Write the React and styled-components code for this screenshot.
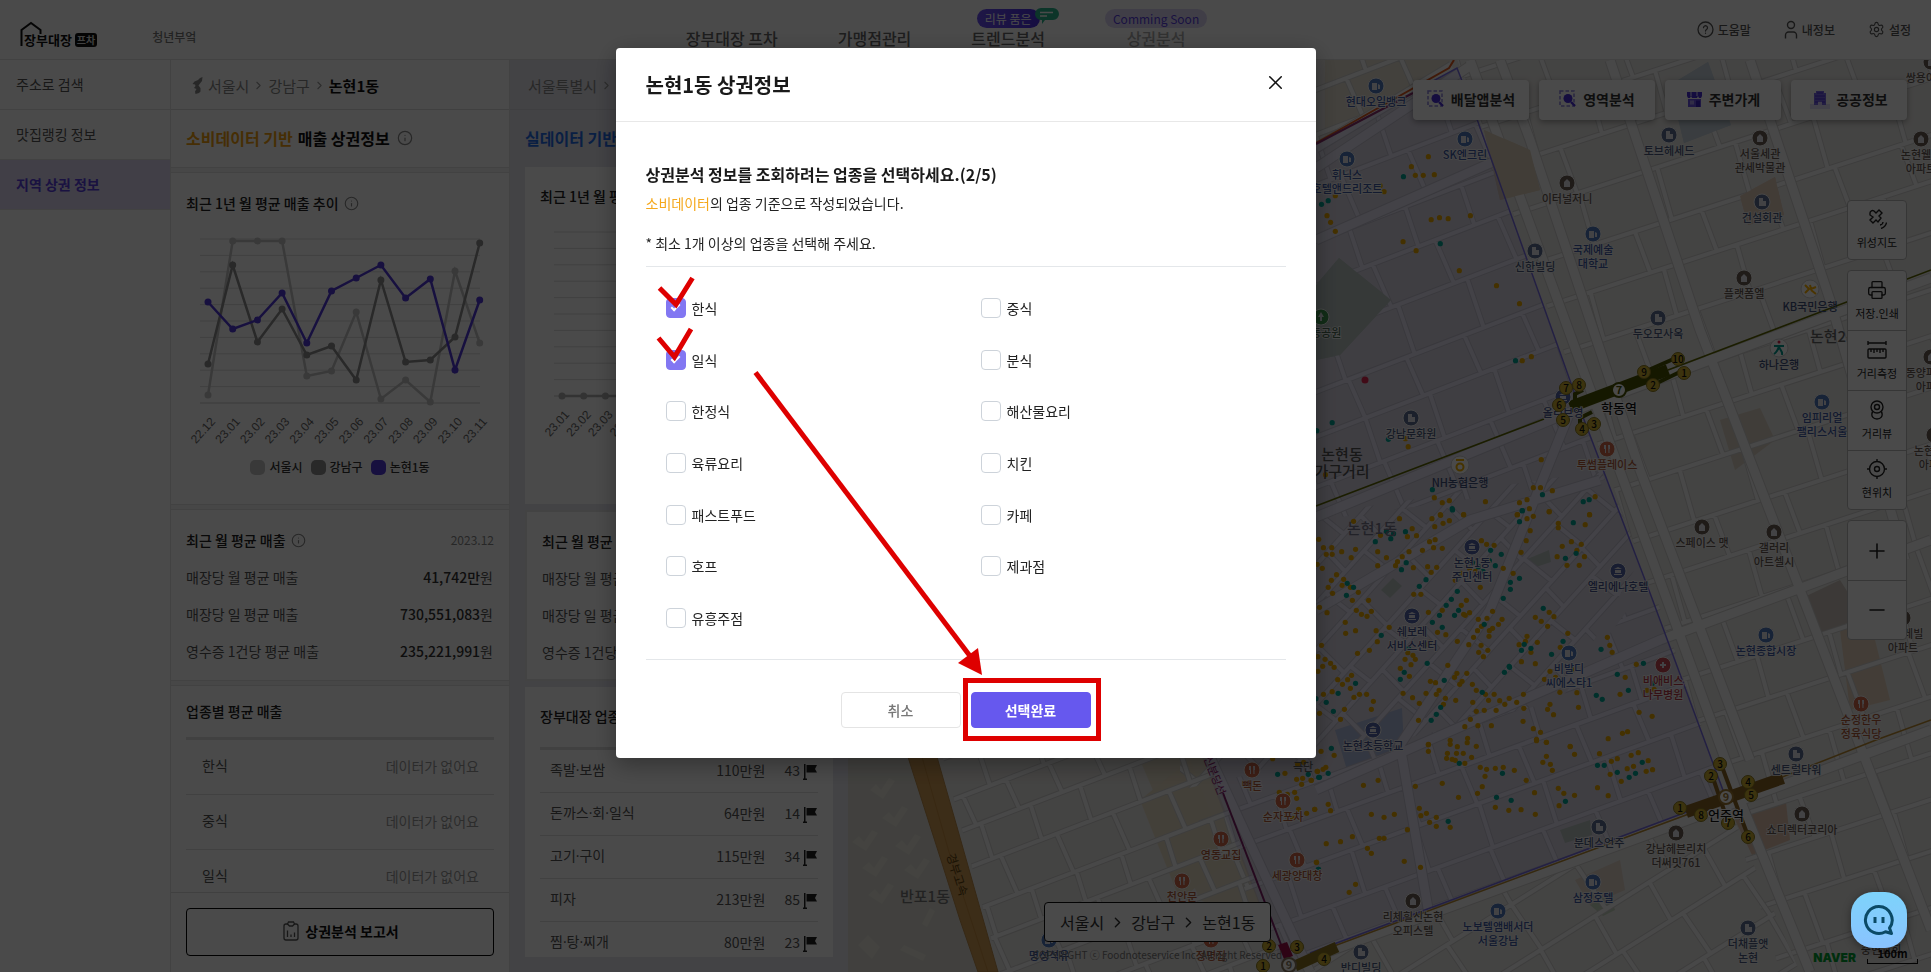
import React, { useState } from "react";
import styled, { createGlobalStyle, css } from "styled-components";
import { ChevronRight, Info, Minus, Plus, Printer, Settings, X } from "lucide-react";

const GlobalStyle = createGlobalStyle`
  *, *::before, *::after { box-sizing: border-box; }
  body {
    margin: 0;
    font-family: "Noto Sans CJK KR", "Noto Sans", sans-serif;
    font-size: 14px;
    line-height: 22px;
    color: #333;
    background: #fff;
  }
  button, input { font: inherit; color: inherit; }
  h1, h2, h3, p, ul { margin: 0; padding: 0; font-size: inherit; font-weight: inherit; }
  ul { list-style: none; }
  a { color: inherit; text-decoration: none; }
`;

/* ---------- page frame ---------- */

const Page = styled.div`
  height: 100vh;
  display: flex;
  flex-direction: column;
  overflow: hidden;
`;

const Header = styled.header`
  flex: none;
  height: 60px;
  padding: 0 20px;
  display: flex;
  border-bottom: 1px solid #e3e3e3;
`;

const HeaderSide = styled.div`
  flex: 1;
  display: flex;
  align-items: center;
  gap: 55px;
`;

const Logo = styled.a`
  position: relative;
  display: flex;
  align-items: flex-end;
  gap: 3px;
  height: 28px;
  margin-top: 10px;
  padding-left: 4px;
  font-size: 13px;
  line-height: 18px;
  font-weight: 700;
  color: #111;
`;

const LogoRoof = styled.svg`
  position: absolute;
  left: 0;
  top: 0;
`;

const LogoTag = styled.span`
  padding: 0 2px;
  border-radius: 3px;
  background: #111;
  color: #ddd;
  font-size: 10px;
  line-height: 14px;
  margin-bottom: 2px;
`;

const Brand = styled.span`
  font-size: 12px;
  font-weight: 500;
  color: #777;
  padding-top: 14px;
`;

const Nav = styled.nav`
  display: flex;
  align-items: flex-end;
  gap: 60px;
  padding-bottom: 11px;
  margin-right: 38px;
`;

const NavLink = styled.a`
  position: relative;
  display: flex;
  flex-direction: column;
  align-items: center;
  font-size: 16px;
  line-height: 20px;
  font-weight: 500;
  color: ${(p) => (p.$muted ? "#aaa" : "#666")};
`;

const Pill = styled.span`
  padding: 0 8px;
  border-radius: 10px;
  font-size: 12px;
  line-height: 19px;
  font-weight: 400;
  color: ${(p) => (p.$solid ? "#fff" : "#5a3fe0")};
  background: ${(p) => (p.$solid ? "linear-gradient(90deg, #6a50f0, #4a2fe0)" : "#dcd6f5")};
`;

const Bubble = styled.svg`
  position: absolute;
  top: -1px;
  right: -14px;
`;

const Utils = styled.div`
  flex: 1;
  display: flex;
  justify-content: flex-end;
  align-items: center;
  gap: 33px;
`;

const UtilButton = styled.button`
  display: flex;
  align-items: center;
  gap: 4px;
  padding: 0;
  border: 0;
  background: none;
  font-size: 12px;
  font-weight: 500;
  color: #555;
`;

const Body = styled.div`
  flex: 1;
  min-height: 0;
  display: flex;
`;

const SideNav = styled.nav`
  flex: none;
  width: 171px;
  border-right: 1px solid #e3e3e3;
`;

const SideLink = styled.a`
  display: flex;
  align-items: center;
  height: 50px;
  padding: 0 16px 2px;
  color: #555;
  border-bottom: 1px solid #e3e3e3;
  ${(p) =>
    p.$active &&
    css`
      color: #5b40e0;
      font-weight: 700;
      background: #dedaf5;
    `}
`;

/* ---------- panels ---------- */

const Panel = styled.section`
  flex: none;
  display: flex;
  flex-direction: column;
  width: ${(p) => (p.$tinted ? 338 : 339)}px;
  background: ${(p) => (p.$tinted ? "#e6e5ee" : "#f3f3f3")};
  border-right: ${(p) => (p.$tinted ? 0 : 1)}px solid #e3e3e3;
  overflow: hidden;
`;

const Crumbs = styled.div`
  flex: none;
  display: flex;
  align-items: center;
  gap: 3px;
  height: 50px;
  padding: 2px 16px 0 18px;
  font-size: 15px;
  color: #888;
  background: ${(p) => (p.$tinted ? "none" : "#fff")};
  border-bottom: 1px solid ${(p) => (p.$tinted ? "#d8d8e0" : "#ddd")};
  white-space: nowrap;
  svg { flex: none; color: #999; }
  strong { color: #111; }
`;

const PanelTitle = styled.h2`
  flex: none;
  display: flex;
  align-items: center;
  gap: 5px;
  height: ${(p) => (p.$tinted ? 57 : 58)}px;
  margin-bottom: ${(p) => (p.$tinted ? 0 : 4)}px;
  padding: 0 15px 2px;
  font-size: 16px;
  font-weight: 700;
  color: #111;
  background: ${(p) => (p.$tinted ? "none" : "#fff")};
  border-bottom: ${(p) => (p.$tinted ? 0 : 1)}px solid #e3e3e3;
  white-space: nowrap;
  em { font-style: normal; color: ${(p) => (p.$tinted ? "#1f6be8" : "#f0a010")}; }
  svg { margin-left: 2px; color: #888; }
`;

const Section = styled.div`
  flex: ${(p) => (p.$fill ? "1 1 0" : "none")};
  min-height: 0;
  overflow: hidden;
  margin-bottom: ${(p) => (p.$fill ? 0 : 4)}px;
  padding: ${(p) => (p.$fill ? 14 : 19)}px 15px ${(p) => p.$bottom || 0}px;
  background: #fff;
  border-top: 1px solid #e3e3e3;
  border-bottom: ${(p) => (p.$fill ? 0 : 1)}px solid #e3e3e3;
`;

const CardColumn = styled.div`
  flex: 1;
  min-height: 0;
  display: flex;
  flex-direction: column;
  gap: 6px;
  padding: 0 15px 15px;
`;

const Card = styled.div`
  flex: ${(p) => (p.$fill ? "1 1 0" : "none")};
  min-height: 0;
  overflow: hidden;
  padding: 18px 15px ${(p) => p.$bottom || 0}px;
  background: #fff;
  border: ${(p) => (p.$outlined ? 2 : 0)}px solid #e6e6e6;
`;

const SectionTitle = styled.h3`
  display: flex;
  align-items: center;
  gap: 5px;
  font-weight: 500;
  color: #222;
  white-space: nowrap;
  margin-bottom: ${(p) => p.$gap || 0}px;
  svg { color: #888; }
  time { margin-left: auto; font-size: 12px; font-weight: 400; color: #888; }
`;

const ChartSvg = styled.svg`
  display: block;
  width: 100%;
  height: auto;
`;

const Legend = styled.ul`
  display: flex;
  justify-content: center;
  gap: 8px;
  margin-top: 8px;
`;

const LegendItem = styled.li`
  display: flex;
  align-items: center;
  gap: 4px;
  font-size: 12px;
  line-height: 16px;
  font-weight: 500;
  &::before {
    content: "";
    width: 15px;
    height: 15px;
    border-radius: 5px;
    background: ${(p) => p.$color};
  }
`;

const StatRow = styled.p`
  display: flex;
  justify-content: space-between;
  height: 37px;
  padding-right: 1px;
  line-height: 37px;
  color: #555;
  white-space: nowrap;
  b { font-weight: 500; color: #333; }
`;

const Table = styled.table`
  width: 100%;
  border-collapse: separate;
  border-spacing: 0;
  border-top: 3px solid #dedede;
  td, th {
    height: ${(p) => p.$row}px;
    padding: 0 0 2px;
    border-bottom: 1px solid #dedede;
    font-weight: 400;
    text-align: right;
    color: ${(p) => (p.$empty ? "#999" : "#555")};
    white-space: nowrap;
  }
  th {
    text-align: left;
    color: #555;
    font-family: "Open Sans", "Noto Sans CJK KR", sans-serif;
    padding-left: ${(p) => (p.$empty ? 16 : 10)}px;
  }
  td:last-child { padding-right: ${(p) => (p.$empty ? 15 : 1)}px; }
  svg { vertical-align: middle; margin-left: 3px; }
`;

const PanelFooter = styled.div`
  flex: none;
  padding: 15px 15px 16px;
  background: #fff;
  border-top: 1px solid #ddd;
`;

const ReportButton = styled.button`
  display: flex;
  justify-content: center;
  align-items: center;
  gap: 6px;
  width: 100%;
  height: 48px;
  padding: 0 0 2px 2px;
  border: 1px solid #000;
  border-radius: 4px;
  background: #fff;
  font-weight: 700;
  color: #111;
`;

/* ---------- map ---------- */

const MapArea = styled.main`
  position: relative;
  flex: 1;
  min-width: 0;
  background: #e9e7e1;
`;

const MapSvg = styled.svg`
  display: block;
  width: 100%;
  height: 100%;
`;

const MapButtons = styled.div`
  position: absolute;
  top: 20px;
  right: 24px;
  display: flex;
  gap: 10px;
`;

const MapButton = styled.button`
  display: flex;
  justify-content: center;
  align-items: center;
  gap: 6px;
  width: 116px;
  height: 40px;
  padding: 0 0 2px;
  border: 0;
  border-radius: 4px;
  background: #fff;
  box-shadow: 0 2px 6px rgba(0, 0, 0, 0.35);
  font-weight: 700;
  color: #333;
`;

const MapTools = styled.div`
  position: absolute;
  top: 140px;
  right: 24px;
  display: flex;
  flex-direction: column;
  gap: 10px;
`;

const ToolGroup = styled.div`
  width: 60px;
  border: 1px solid #bbb;
  border-radius: 4px;
  background: #fff;
  overflow: hidden;
`;

const ToolButton = styled.button`
  display: flex;
  flex-direction: column;
  justify-content: center;
  align-items: center;
  gap: 4px;
  width: 100%;
  height: 60px;
  padding: 0;
  border: 0;
  background: none;
  font-size: 11px;
  line-height: 18px;
  color: #222;
  &:first-child:not(:last-child) { height: 59px; }
  &:only-child { height: 58px; }
  &:last-child:not(:first-child) { height: 59px; }
  & + & { border-top: 1px solid #bbb; }
`;

const MapFoot = styled.div`
  position: absolute;
  left: 185px;
  bottom: 6px;
  display: flex;
  flex-direction: column;
  align-items: center;
`;

const PlaceBox = styled.div`
  display: flex;
  align-items: center;
  gap: 5px;
  height: 40px;
  padding: 0 15px;
  border: 1px solid #111;
  border-radius: 4px;
  background: #fff;
  font-size: 16px;
  color: #333;
`;

const Copyright = styled.p`
  margin-top: 2px;
  font-size: 10px;
  color: #777;
`;

const MapScale = styled.div`
  position: absolute;
  right: 13px;
  bottom: 8px;
  display: flex;
  align-items: flex-end;
  gap: 11px;
  color: #00a030;
  font-family: Inter, "Noto Sans", sans-serif;
  font-weight: 900;
  font-size: 12px;
  line-height: 12px;
`;

const ScaleBar = styled.span`
  width: 51px;
  height: 15px;
  font-family: "Noto Sans CJK KR", "Noto Sans", sans-serif;
  font-weight: 700;
  font-size: 11px;
  line-height: 9px;
  text-align: center;
  color: #111;
  background:
    linear-gradient(#111, #111) left bottom / 1px 5px no-repeat,
    linear-gradient(#111, #111) right bottom / 1px 5px no-repeat,
    linear-gradient(#111, #111) left bottom / 100% 1px no-repeat;
`;

/* ---------- dialog ---------- */

const Backdrop = styled.div`
  position: fixed;
  inset: 0;
  z-index: 10;
  display: flex;
  justify-content: center;
  align-items: flex-start;
  padding-top: 48px;
  background: rgba(0, 0, 0, 0.71);
`;

const Dialog = styled.form`
  position: relative;
  width: 700px;
  border-radius: 4px;
  background: #fff;
  box-shadow: 0 6px 24px rgba(0, 0, 0, 0.35);
  color: #222;
`;

const DialogHeader = styled.div`
  display: flex;
  justify-content: space-between;
  align-items: center;
  height: 74px;
  padding: 0 30px;
  border-bottom: 1px solid #e8e8e8;
  h1 { font-size: 20px; font-weight: 700; color: #1a1a1a; }
`;

const CloseButton = styled.button`
  display: flex;
  justify-content: center;
  align-items: center;
  width: 20px;
  height: 20px;
  padding: 0;
  margin-bottom: 4px;
  border: 0;
  background: none;
  color: #111;
  svg { flex: none; }
`;

const DialogBody = styled.div`
  padding: 40px 30px 30px;
`;

const Question = styled.h2`
  font-size: 16px;
  line-height: 24px;
  font-weight: 700;
  color: #1a1a1a;
`;

const Hint = styled.p`
  margin-top: ${(p) => p.$gap}px;
  em { font-style: normal; color: #f5a81c; }
`;

const Options = styled.div`
  display: grid;
  grid-template-columns: 315px 1fr;
  grid-auto-rows: 1fr;
  height: 394px;
  margin-top: 12px;
  padding: 15px 20px;
  border: solid #e4e7ea;
  border-width: 1px 0;
`;

const Option = styled.label`
  display: flex;
  align-items: center;
  gap: 6px;
  grid-column: ${(p) => p.$column};
`;

const CheckBox = styled.input`
  appearance: none;
  display: grid;
  place-items: center;
  width: 20px;
  height: 20px;
  margin: 0;
  border: 1px solid #cdd3da;
  border-radius: 4px;
  background: #fff;
  &:checked { background: #8277f2; border-color: #8277f2; }
  &:checked::after {
    content: "";
    width: 5px;
    height: 9px;
    margin-bottom: 2px;
    border: solid #fff;
    border-width: 0 2px 2px 0;
    transform: rotate(45deg);
  }
`;

const Actions = styled.div`
  display: flex;
  justify-content: center;
  gap: 10px;
  margin-top: 32px;
`;

const ActionButton = styled.button`
  width: 120px;
  height: 36px;
  padding: 0;
  border: 1px solid ${(p) => (p.$primary ? "#6658ee" : "#e4e4e4")};
  border-radius: 4px;
  background: ${(p) => (p.$primary ? "#6658ee" : "#fff")};
  color: ${(p) => (p.$primary ? "#fff" : "#777")};
  font-weight: ${(p) => (p.$primary ? 700 : 500)};
`;

const Marks = styled.svg`
  position: absolute;
  left: 0;
  top: 0;
  pointer-events: none;
`;

const ChatButton = styled.button`
  position: fixed;
  right: 24px;
  bottom: 24px;
  z-index: 20;
  display: grid;
  place-items: center;
  width: 56px;
  height: 56px;
  padding: 0;
  border: 0;
  border-radius: 22px;
  background: linear-gradient(#7dd3fb, #8ac3ff);
  box-shadow: 0 2px 8px rgba(0, 0, 0, 0.4);
`;

/* ---------- small icons ---------- */

const KoreaIcon = () => (
  <svg width="16" height="20" viewBox="0 0 16 20" fill="#888">
    <path d="M13.500 1 11 2 9 4 5.500 5.500 3.500 8l2.500.5L6.500 10 5 12l2.500 1-1.500 2.500L6.500 18 10 17l1.500-1.500V12L9.500 9.500 11 7.500l2-2.500z" />
  </svg>
);

const HelpIcon = () => (
  <svg width="17" height="17" viewBox="0 0 17 17" fill="none" stroke="currentColor" strokeWidth="1.300" strokeLinecap="round">
    <circle cx="8.500" cy="8.500" r="7.500" />
    <path d="M6.500 6.700a2 2 0 1 1 3 1.800c-.8.500-1 .8-1 1.500M8.500 12.200v.1" />
  </svg>
);

const UserIcon = () => (
  <svg width="14" height="19" viewBox="0 0 14 19" fill="none" stroke="currentColor" strokeWidth="1.400">
    <circle cx="7" cy="5" r="3.500" />
    <path d="M1.500 18.500V15a3 3 0 0 1 3-3h5a3 3 0 0 1 3 3v3.500" />
  </svg>
);

const ReportIcon = () => (
  <svg width="16" height="20" viewBox="0 0 16 20" fill="none" stroke="#555" strokeWidth="1.300">
    <path d="M5 3H3a2 2 0 0 0-2 2v12a2 2 0 0 0 2 2h10a2 2 0 0 0 2-2V5a2 2 0 0 0-2-2h-2" />
    <path d="M5.500 1h5l1 2-2 2h-3l-2-2zM4.500 9.500V16M8 13.500V16M11.500 11.500V16" />
  </svg>
);

const FlagIcon = () => (
  <svg width="14" height="16" viewBox="0 0 14 16" fill="#222">
    <path d="M1 0h1.500v15H1zM0 14.500h4V16H0zM3.500 1H14l-2 4 2 3.500H3.500z" />
  </svg>
);

const AreaIcon = () => (
  <svg width="18" height="18" viewBox="0 0 18 18" fill="none">
    <rect x="1" y="1" width="14" height="15" stroke="#8f82e0" strokeWidth="1.500" strokeDasharray="3.500 2" />
    <circle cx="9" cy="8.500" r="4.500" fill="#4a2fd8" />
    <path d="m12 12 4 4" stroke="#4a2fd8" strokeWidth="2.400" />
  </svg>
);

const StoreIcon = () => (
  <svg width="17" height="17" viewBox="0 0 17 17">
    <path d="M1 1h15v4l-1 2h-2l-1-2-1 2H6L5 5 4 7H2L1 5z" fill="#4a2fd8" />
    <path d="M4 1h2v4H4zM10 1h2v4h-2z" fill="#9a8cf0" />
    <path d="M2 8h13v8H2z" fill="#6a55e8" />
    <path d="M4 9.500h4v4H4z" fill="#a99cf0" />
    <path d="M10 9.500h4V16h-4z" fill="#3a20c0" />
  </svg>
);

const PublicIcon = () => (
  <svg width="20" height="19" viewBox="0 0 20 19">
    <path d="M0 14h20v5H0z" fill="#e3defc" />
    <path d="M6 1h8v2h2v12H4V3h2z" fill="#7a68e8" />
    <path d="M5 6h10M5 9h10M7 3h6M5 12h3M12 12h3" stroke="#4a2fd8" strokeWidth="1.200" />
    <path d="M8 12h4v3H8z" fill="#d8d0fa" />
  </svg>
);

const toolShapes = {
  satellite: (
    <>
      <path d="M3 4a2.500 2.500 0 0 1 4-2l2 2 3-3 3 3-3 3 2 2-3 4-2-2-3 3-3-3 3-3-3-2z" />
      <path d="M13 16c1.500 0 3-1.500 3-3M14 19.500c3-1 5-3 5.500-6" />
    </>
  ),
  ruler: (
    <>
      <path d="M1 3h18M1 1v4M19 1v4" />
      <rect x="1" y="9" width="18" height="9" rx="1" />
      <path d="M4 9v3M7 9v4M10 9v3M13 9v4M16 9v3" />
    </>
  ),
  roadview: (
    <>
      <circle cx="10" cy="7" r="6" />
      <circle cx="10" cy="7" r="2.500" />
      <path d="M5.500 11.500c-2 5 1 7.500 4.500 7.500s6.500-2.500 4.500-7.500" />
    </>
  ),
  target: (
    <>
      <circle cx="10" cy="10" r="7.500" />
      <circle cx="10" cy="10" r="2.500" />
      <path d="M10 0v3M10 17v3M0 10h3M17 10h3" />
    </>
  ),
};

const ToolIcon = ({ name }) => (
  <svg width="20" height="20" viewBox="0 0 20 20" fill="none" stroke="currentColor" strokeWidth="1.400">
    {toolShapes[name]}
  </svg>
);

/* ---------- charts ---------- */

const months = ["22.12", "23.01", "23.02", "23.03", "23.04", "23.05", "23.06", "23.07", "23.08", "23.09", "23.10", "23.11"];

const series = [
  { name: "서울시", color: "#c4c4c4", ys: [156, 2, 2, 2, 137, 132, 73, 160, 141, 163, 32, 104] },
  { name: "강남구", color: "#8c8c8c", ys: [125, 26, 103, 70, 116, 107, 141, 41, 123, 121, 98, 4] },
  { name: "논현1동", color: "#5038d8", ys: [63, 90, 81, 54, 104, 52, 39, 26, 59, 40, 131, 61] },
];

const flatSeries = [{ name: "실데이터", color: "#b0b0b0", ys: Array(11).fill(164) }];

function LineChart({ labels, data, left, step, end, width }) {
  return (
    <ChartSvg viewBox={`0 0 ${width} 222`}>
      {Array.from({ length: 11 }, (_, i) => (
        <line key={i} x1={left - 8} x2={end} y1={10 + i * 16.4} y2={10 + i * 16.4} stroke={i === 10 ? "#c8c8c8" : "#dcdcdc"} />
      ))}
      {data.map((s) => (
        <g key={s.name} fill={s.color}>
          <polyline
            points={s.ys.map((y, i) => `${left + i * step},${y + 10}`).join(" ")}
            fill="none"
            stroke={s.color}
            strokeWidth="2.500"
          />
          {s.ys.map((y, i) => (
            <circle key={i} cx={left + i * step} cy={y + 10} r="3.500" />
          ))}
        </g>
      ))}
      {labels.map((m, i) => (
        <text
          key={m}
          transform={`translate(${left + 8 + i * step} 193) rotate(-48)`}
          textAnchor="end"
          fontFamily="Liberation Sans, Arial, sans-serif"
          fontSize="12"
          fill="#666"
        >
          {m}
        </text>
      ))}
    </ChartSvg>
  );
}

/* ---------- map drawing ---------- */

function roadGrid(angle, cx, cy, size, stepU, stepV) {
  const out = [];
  const rad = (angle * Math.PI) / 180;
  const point = (u, v) => {
    const x = cx + u * Math.cos(rad) - v * Math.sin(rad);
    const y = cy + u * Math.sin(rad) + v * Math.cos(rad);
    return `${x.toFixed(1)} ${y.toFixed(1)}`;
  };
  let n = 0;
  for (let v = -size; v <= size; ) {
    const next = v + stepV + (n % 3) * 5;
    out.push(`M${point(-size, v)}L${point(size, v)}`);
    for (let u = -size + ((n * 37) % stepU); u < size; u += stepU + ((n * 7) % 19)) {
      out.push(`M${point(u, v)}L${point(u + (n % 2 ? 2 : -2), next)}`);
    }
    v = next;
    n += 1;
  }
  return out.join("");
}

const regions = [
  { id: "north", area: "1180,60 1457,60 1605,480 1180,540", d: roadGrid(-21, 1400, 260, 330, 56, 42) },
  { id: "inner", area: "1180,535 1605,470 1640,560 1560,700 1400,740 1180,790", d: roadGrid(-48, 1420, 620, 300, 46, 26) },
  { id: "south", area: "1180,790 1400,740 1560,700 1650,580 1726,795 1290,972", d: roadGrid(-20, 1480, 800, 320, 50, 36) },
  { id: "east", area: "1457,60 1931,60 1931,972 1780,972 1726,795", d: roadGrid(-18, 1760, 400, 640, 64, 44) },
  { id: "southeast", area: "1726,800 1800,972 1290,972", d: roadGrid(-32, 1600, 920, 300, 60, 44) },
  { id: "southwest", area: "938,740 1200,740 1290,972 1000,972", d: roadGrid(-21, 1100, 860, 220, 44, 32) },
];

const mainRoads =
  "M1316 168 1470 66M1316 240 1520 150M1316 148 1452 66M1470 60 1740 800 1810 972M1316 517 1570 412 1931 278" +
  "M1300 962 1726 806 1931 730M1500 60 1530 140 1640 470 1750 760M1610 60 1700 330 1931 930M1750 60 1830 300 1905 560" +
  "M1316 790 1430 740 1660 640 1931 540M1570 412 1490 610 1400 745 1430 920M1316 610 1470 520 1600 480M1210 757 1310 972";

const blocks = [
  ["#c5d4bf", "1316,285 1339,258 1391,300 1340,355 1316,360"],
  ["#c6d3dc", "1670,85 1708,62 1731,125 1684,143"],
  ["#e4cdbb", "1740,196 1775,177 1784,215 1748,225"],
  ["#e0d1bc", "1484,130 1530,150 1540,190 1500,200"],
  ["#dcd2c4", "1720,420 1760,408 1775,440 1735,470"],
  ["#cdc5bd", "1798,600 1840,580 1862,615 1815,640"],
  ["#c5d4bf", "1525,560 1549,550 1551,562 1536,567"],
  ["#c5d4bf", "1381,590 1393,578 1402,586 1390,598"],
  ["#bccbe0", "1335,730 1402,708 1404,745 1350,780"],
  ["#e6d2bd", "1840,630 1870,620 1890,700 1850,710"],
  ["#e4c4b0", "1735,820 1786,802 1790,840 1752,855"],
  ["#e8dcc4", "1140,800 1190,760 1230,860 1180,900"],
  ["#e2d4c8", "1575,880 1620,860 1625,890 1590,905"],
  ["#c5d4bf", "1590,905 1610,895 1615,910 1603,916"],
  ["#c5d4bf", "1560,830 1590,820 1592,835 1565,843"],
];

const inks = {
  blue: ["#5079bf", "#4059a4"],
  slate: ["#5f7095", "#4d5c80"],
  brown: ["#6c5d54", "#685b53"],
  orange: ["#d2694a", "#b05a38"],
  red: ["#c84a55", "#b83a48"],
  purple: ["#5365a8", "#46528f"],
  green: ["#3f9a50", "#4a6a54"],
};

const pois = [
  [1376, 86, "blue", "현대오일뱅크"], [1465, 139, "blue", "SK엔크린"], [1347, 159, "blue", "휘닉스", "호텔앤드리조트"],
  [1567, 183, "brown", "이터널저니"], [1669, 135, "slate", "토브헤세드"], [1760, 138, "brown", "서울세관", "관세박물관"],
  [1921, 139, "brown", "논현웰스", "아파트"], [1931, 62, "brown", "쌍용아파트"], [1762, 202, "slate", "건설회관"],
  [1593, 234, "blue", "국제예술", "대학교"], [1535, 251, "slate", "신한빌딩"], [1744, 278, "brown", "플랫폼엘"],
  [1658, 318, "slate", "두오모사옥"], [1822, 402, "blue", "임피리얼", "팰리스서울"], [1411, 418, "slate", "강남문화원"],
  [1607, 449, "orange", "투썸플레이스"], [1563, 397, "purple", "올리브영"], [1321, 317, "green", "학동공원"],
  [1931, 357, "brown", "동양파라곤", "아파트"], [1934, 435, "brown", "논현두산", "아파트"], [1472, 547, "purple", "논현1동", "주민센터"],
  [1618, 571, "purple", "엘리에나호텔"], [1702, 527, "brown", "스페이스 맷"], [1774, 532, "brown", "갤러리", "아트셀시"],
  [1412, 616, "purple", "쉐보레", "서비스센터"], [1569, 653, "blue", "비발디", "씨에스타1"], [1766, 635, "blue", "논현종합시장"],
  [1663, 665, "red", "비애비스", "나무병원"], [1861, 704, "orange", "순정한우", "정육식당"], [1903, 618, "brown", "센트레빌", "아파트"],
  [1373, 730, "purple", "논현초등학교"], [1796, 754, "slate", "센트럴타워"], [1599, 827, "slate", "분데스언주"],
  [1676, 833, "brown", "강남헤븐리치", "더써밋761"], [1802, 814, "brown", "쇼디렉터코리아"], [1593, 882, "blue", "삼정호텔"],
  [1413, 901, "brown", "리체힐신논현", "오피스텔"], [1498, 911, "blue", "노보텔앰배서더", "서울강남"], [1361, 952, "slate", "반디빌딩"],
  [1748, 928, "slate", "더채플앳", "논현"], [1252, 770, "orange", "빽돈"], [1283, 801, "orange", "순자포차"],
  [1221, 839, "orange", "영동교집"], [1297, 860, "orange", "세광양대창"], [1182, 881, "orange", "천안문"],
  [1049, 940, "blue", "명성석유"], [1211, 940, "orange", "정명집"], [1881, 934, "brown", "중현교회"],
];

const glyphs = {
  blue: "M-4-3h5v7h-5zM2-2l2 1v4H2",
  slate: "M-3-4h4v8h-4zM1-1h3v5H1z",
  brown: "M-3 4v-5l3-3 3 3v5z",
  orange: "M-3-4h2v8h-1v-4h-1zM1-4h2v4H2.500v4h-1z",
  red: "M-1-3h2v2h2v2H1v2h-2V1h-2v-2h2z",
  purple: "M-4 3h8v1h-8zM-3-1h6v3h-6zM0-4l4 2h-8z",
  green: "M0-5 3 0H1v4h-2V0h-2z",
};

const districts = [
  [1372, 529, "논현1동", "#77758a"], [1342, 455, "논현동", "#555"], [1342, 472, "가구거리", "#555"],
  [1835, 337, "논현2동", "#666"], [925, 897, "반포1동", "#777"],
];

const exits = [
  [1678, 359, 10], [1644, 372, 9], [1684, 373, 1], [1653, 385, 2], [1566, 388, 7], [1579, 385, 8], [1559, 405, 6],
  [1563, 420, 5], [1582, 429, 4], [1594, 424, 3], [1720, 764, 3], [1711, 776, 2], [1748, 782, 4], [1751, 795, 5],
  [1680, 808, 1], [1701, 815, 8], [1728, 823, 7], [1748, 837, 6], [1269, 946, 2], [1297, 947, 3], [1263, 966, 1], [1324, 959, 4],
];

/* Shop markers, grouped by map tile; each tile has its own origin and unit. */
const tiles = [
  {
    x: 1310, y: 0,
    yellow: "299,470 256,500 266,526 286,526 314,524 177,557 187,575 64,587 43,647 52,667 64,694 306,659 327,653 349,656 405,647 235,725 268,752",
    teal: "236,530 46,602 29,613 329,731",
  },
  {
    x: 1310, y: 260,
    yellow: "377,32 471,77 529,131 559,290 536,302 241,536 248,560 39,644 584,599 564,683 582,683 612,692 720,710 314,713 334,728 352,722 443,725 529,728 548,719 554,746 604,755 706,764 388,764 329,764 524,764",
    teal: "519,302 56,488 17,512 198,538 309,689 587,704 359,746 536,752 690,725 705,719",
  },
  {
    x: 1310, y: 510,
    yellow: "110,34 226,26 258,56 308,26 330,16 315,50 336,40 352,32 388,14 523,14 548,26 564,19 604,5 627,40 627,53 556,62 546,92 706,14 695,44 178,76 246,80 269,77 302,95 316,89 312,113 334,115 284,121 250,125 233,140 221,155 216,167 261,173 297,170 320,172 306,187 34,113 55,113 41,133 56,133 80,125 115,118 104,143 171,125 193,143 171,167 22,88 18,163 31,175 67,194 54,211 85,208 46,232 81,226 57,250 122,247 102,232 107,271 148,271 24,292 43,308 117,301 130,313 144,319 155,304 89,337 90,370 115,362 167,362 200,352 170,395 150,421 120,430 29,406 20,440 38,448 32,469 52,460 61,472 20,484 105,496 70,509 95,509 82,523 102,535 56,545 34,553 125,553 143,553 160,574 111,562 87,598 155,598 77,628 24,610 367,211 382,190 403,175 430,232 433,92 446,103 465,106 418,184 488,175 513,190 533,127 262,253 280,253 299,307 334,301 395,271 382,286 392,316 403,308 388,313 461,304 447,325 425,328 485,328 476,343 433,349 461,355 453,362 423,362 413,382 452,379 343,374 372,394 401,404 432,406 426,427 449,421 438,440 322,367 302,397 292,404 247,428 240,448 260,436 266,448 255,464 228,475 251,499 348,466 371,490 365,502 396,490 384,514 410,523 378,523 368,571 411,577 337,583 326,541 319,553 293,550 304,514 317,518 235,550 259,563 276,580 342,565 548,379 544,394 574,397 558,427 534,455 569,461 528,404 632,412 651,370 616,320 604,307 569,322 584,334 600,349 606,484 661,478 592,508 620,502 631,547 674,548 678,592 606,583 600,598 615,614 540,595 539,553 522,577 503,565 492,583 479,572 470,601 465,553 420,541 443,553 451,571 440,601 405,628 391,650 420,604 458,647 424,647 538,634 564,656 582,667 572,688 597,697 657,710 660,95 685,103 674,121 637,109 624,140 649,166 680,166 693,140 751,382 757,406 763,427 824,463 796,502 783,553 831,607 864,619 753,686 789,670 802,665 851,541 869,538 299,703 354,691 398,685 274,631 652,430",
    teal: "536,2 529,35 665,38 360,0 211,71 193,64 241,65 165,95 204,86 243,158 231,179 293,209 276,229 372,244 357,268 344,286 327,316 309,337 375,301 365,316 334,352 94,220 110,232 92,256 180,376 456,121 483,133 453,152 410,158 437,184 468,167 425,170 453,199 506,217 529,205 506,238 488,265 589,295 645,145 672,130 440,343 541,403 534,421 558,415 610,433 639,394 503,469 491,487 504,472 249,415 296,460 238,487 228,508 339,511 435,547 330,592 319,613 306,631 115,520 71,550 41,577 59,604 735,418 776,493 804,541 842,460 723,556 738,568 865,520 886,511 15,566",
  },
  {
    x: 1310, y: 740,
    yellow: "299,14 299,34 354,13 347,40 345,55 370,40 387,40 367,61 359,58 408,52 391,70 372,20 397,8 420,19 430,82 446,88 442,109 468,85 488,82 516,91 546,121 567,158 627,145 641,160 668,166 629,197 569,223 533,209 502,211 468,202 435,140 423,160 375,172 334,130 266,139 172,121 135,136 46,193 52,212 12,208 155,223 187,232 213,223 276,205 294,220 280,227 302,247 319,232 319,259 354,262 246,269 175,295 187,295 145,325 155,340 107,290 77,305 41,311 238,364 279,382 115,433 99,457 16,367 597,49 607,73 588,67 612,91 657,19 668,43 572,2 597,7 731,41 776,56 761,64 758,103 786,124 801,86 817,79 829,38 811,46 854,62 849,94 865,89 726,143 753,167 61,46 28,34 40,82 33,88 3,121 18,94",
    teal: "377,70 486,100 471,172 508,181 645,184 349,244 726,76 743,76 776,97 822,100 806,112 839,67 54,25 46,100 24,112 21,388",
  },
  {
    x: 840, y: 740,
    yellow: "1298,56 1335,100 1370,118 1388,115 1385,133 1414,121 1391,67 1373,73 1433,94 1318,157 1342,163 1364,157 1370,175 1376,208 1400,220 1424,208 1358,235 1430,367 1409,400",
    teal: "1313,103 1405,103 1436,112 1436,388",
    unit: 0.3333,
  },
];

const Dots = ({ tile, color, list }) =>
  list.split(" ").map((pair, i) => {
    const [x, y] = pair.split(",").map(Number);
    return <circle key={i} cx={tile.x + x * (tile.unit || 0.396)} cy={tile.y + y / 3} r="2.600" fill={color} />;
  });

const Roads = ({ d, width }) => (
  <g fill="none">
    <path d={d} stroke="#d2d1d0" strokeWidth={width + 2} />
    <path d={d} stroke="#f7f7f7" strokeWidth={width} />
  </g>
);

function CityMap() {
  return (
    <MapSvg viewBox="848 60 1083 912" preserveAspectRatio="xMinYMin slice" role="img" aria-label="논현1동 지도">
      <rect x="848" y="60" width="1083" height="912" fill="#ebe9e6" />
      <path d="M848 740H905L978 972H848z" fill="#dfddd5" />
      <path d="M1140 760 1205 757 1270 930 1200 900z" fill="#e6ddc8" />
      <path d="M1450 60H1325V140L1448 66z" fill="#e7e0d2" />
      {blocks.map(([fill, points]) => (
        <polygon key={points} points={points} fill={fill} />
      ))}
      {regions.map((r) => (
        <g key={r.id}>
          <clipPath id={r.id}>
            <polygon points={r.area} />
          </clipPath>
          <g clipPath={`url(#${r.id})`}>
            <Roads d={r.d} width={4} />
          </g>
        </g>
      ))}
      <Roads d={mainRoads} width={9} />
      {blocks.slice(0, 4).map(([fill, points]) => (
        <polygon key={points} points={points} fill={fill} />
      ))}
      <path d="M1180 216 1316 143 1457 68 1583 417 1726 797 1283 966 1180 700z" fill="#7060d8" fillOpacity="0.130" />
      <path
        d="m870 790 6-6 5 6 8-12 6 3-12 18zM882 818l7-6 5 6 8-12 6 3-12 18zM852 842l7-6 5 6 8-12 6 3-12 18zM895 846l7-6 5 6 8-12 6 3-12 18zM862 868l7-6 5 6 8-12 6 3-12 18zM904 870l7-6 5 6 8-12 6 3-12 18zM868 895l7-6 5 6 8-12 6 3-12 18zM922 924l8-16 5 3-8 16zM900 950l4-5 22 10-3 6zM858 945l10-10 12 12-8 12z"
        fill="#e9e7dc"
      />
      <path d="M908 757h29l20 70 41 145h-20l-18-52-20-63z" fill="#cf9a52" stroke="#b98a4a" />
      <path d="M922 757l27 95 39 120" fill="none" stroke="#c18a40" />

      <path d="M1316 143 1449 68 1454 60" fill="none" stroke="#e05a20" strokeWidth="2" />
      <path d="M1316 144 1413 93" fill="none" stroke="#8f3070" strokeWidth="2" />
      <path d="M1413 92 1457 68 1478 122 1583 417 1650 593 1724 793" fill="none" stroke="#7a6ee8" strokeWidth="1.500" />
      <path d="M1310 953 1724 798" fill="none" stroke="#7a6ee8" strokeWidth="1.500" />
      <path d="M1310 955 1686 815 1876 740 1931 720" fill="none" stroke="#b98a30" strokeWidth="1.500" />
      <path d="M1223 793 1285 955" fill="none" stroke="#802068" strokeWidth="2" />

      <path d="M1316 506 1544 419M1668 370 1931 270" fill="none" stroke="#5d6600" strokeWidth="1.500" />
      <path d="M1644 372 1678 357M1653 385 1684 370M1575 404V394l8-4M1580 424v-6l12-6" fill="none" stroke="#4a5400" strokeWidth="4" />
      <path d="M1570 407 1668 370" stroke="#4a5400" strokeWidth="12" />
      <path d="M1686 812 1783 778" stroke="#8a6424" strokeWidth="12" />
      <path d="M1713 778 1728 822M1721 764 1748 836" stroke="#8a6424" strokeWidth="4" />
      <path d="M1295 966 1337 947" stroke="#8a7420" strokeWidth="11" />
      <path d="m1278 945 9-3 6 14-9 3z" fill="#a01048" />

      {tiles.map((t) => (
        <g key={`${t.x}-${t.y}`}>
          <Dots tile={t} color="#eba800" list={t.yellow} />
          <Dots tile={t} color="#00a596" list={t.teal} />
        </g>
      ))}
      <circle cx="1365" cy="380" r="3.500" fill="#e02850" />

      {pois.map(([x, y, kind, ...lines]) => (
        <g key={lines.join()} transform={`translate(${x} ${y})`}>
          <circle r="8" fill={inks[kind][0]} stroke="#f4f4f4" strokeWidth="1" />
          <path d={glyphs[kind]} fill="#e8e8ee" />
          {lines.map((line, i) => (
            <text
              key={line}
              y={20 + i * 14}
              textAnchor="middle"
              fontSize="11"
              fontWeight="500"
              fill={inks[kind][1]}
              stroke="#f4f4f4"
              strokeWidth="1.500"
              paintOrder="stroke"
            >
              {line}
            </text>
          ))}
        </g>
      ))}
      <g textAnchor="middle" fontSize="11" fontWeight="500" fill="#3f4f7c">
        <circle cx="1810" cy="289" r="9" fill="#fff" stroke="#ccc" />
        <path d="m1805 285 4 4-4 4m5-8 1 4 5-2m-5 3 5 4" stroke="#ffb200" strokeWidth="2" fill="none" />
        <text x="1810" y="311">KB국민은행</text>
        <circle cx="1779" cy="348" r="9" fill="#fff" stroke="#ccc" />
        <path d="M1774 346h10m-5 0c0 4 4 4 3 9m-3-9c-1 4-2 6-5 8" stroke="#009a8c" strokeWidth="2" fill="none" />
        <circle cx="1779" cy="342" r="1.500" fill="#e02850" />
        <text x="1779" y="369">하나은행</text>
        <circle cx="1460" cy="465" r="9" fill="#fff" stroke="#ccc" />
        <circle cx="1460" cy="467" r="3.500" stroke="#f0b000" strokeWidth="2" fill="none" />
        <path d="M1456 460h8" stroke="#f0b000" strokeWidth="2" />
        <text x="1460" y="487">NH농협은행</text>
        <text x="1303" y="771" fill="#666">극단</text>
      </g>
      {districts.map(([x, y, name, fill]) => (
        <text key={name} x={x} y={y + 5} textAnchor="middle" fontSize="15" fontWeight="500" fill={fill}>
          {name}
        </text>
      ))}
      <text transform="translate(953 876) rotate(72)" textAnchor="middle" fontSize="12" fill="#5a4010">경부고속</text>
      <text transform="translate(1211 777) rotate(68)" textAnchor="middle" fontSize="11" fill="#902070">신분당선</text>

      {exits.map(([x, y, n]) => (
        <g key={`${x}-${y}`}>
          <circle cx={x} cy={y} r="6.500" fill="#d0b030" stroke="#8a7a20" />
          <text x={x} y={y + 4} textAnchor="middle" fontSize="10" fontWeight="500" fill="#111">{n}</text>
        </g>
      ))}
      {[[1619, 390, 7, "#4a5200"], [1726, 797, 9, "#a07830"], [1289, 965, 9, "#8a7a60"]].map(([x, y, n, c]) => (
        <g key={`${x}-${y}`}>
          <circle cx={x} cy={y} r="7" fill="#fff" stroke={c} strokeWidth="2" />
          <text x={x} y={y + 4} textAnchor="middle" fontSize="11" fontWeight="700" fill={c}>{n}</text>
        </g>
      ))}
      <g textAnchor="middle" fontSize="13" fontWeight="500" fill="#111" stroke="#fff" strokeWidth="2" paintOrder="stroke">
        <text x="1619" y="413">학동역</text>
        <text x="1726" y="820">언주역</text>
      </g>
    </MapSvg>
  );
}

/* ---------- data ---------- */

const stats = [
  ["매장당 월 평균 매출", "41,742만"],
  ["매장당 일 평균 매출", "730,551,083"],
  ["영수증 1건당 평균 매출", "235,221,991"],
];

const ranking = [
  ["족발·보쌈", "110만원", 43],
  ["돈까스·회·일식", "64만원", 14],
  ["고기·구이", "115만원", 34],
  ["피자", "213만원", 85],
  ["찜·탕·찌개", "80만원", 23],
];

const categories = ["한식", "중식", "일식", "분식", "한정식", "해산물요리", "육류요리", "치킨", "패스트푸드", "카페", "호프", "제과점", "유흥주점"];

const Stats = () =>
  stats.map(([label, value]) => (
    <StatRow key={label}>
      <span>{label}</span>
      <span><b>{value}</b>원</span>
    </StatRow>
  ));

function CategoryDialog() {
  const [picked, setPicked] = useState(["한식", "일식"]);
  const toggle = (name) =>
    setPicked((list) => (list.includes(name) ? list.filter((n) => n !== name) : [...list, name]));

  return (
    <Backdrop>
      <Dialog role="dialog" aria-modal="true" aria-labelledby="dialog-title" onSubmit={(e) => e.preventDefault()}>
        <DialogHeader>
          <h1 id="dialog-title">논현1동 상권정보</h1>
          <CloseButton type="button" aria-label="닫기"><X size={23} strokeWidth={1.6} /></CloseButton>
        </DialogHeader>
        <DialogBody>
          <Question>상권분석 정보를 조회하려는 업종을 선택하세요.({picked.length}/5)</Question>
          <Hint $gap={6}><em>소비데이터</em>의 업종 기준으로 작성되었습니다.</Hint>
          <Hint $gap={18}>* 최소 1개 이상의 업종을 선택해 주세요.</Hint>
          <Options>
            {categories.map((name, i) => (
              <Option key={name} $column={(i % 2) + 1}>
                <CheckBox type="checkbox" checked={picked.includes(name)} onChange={() => toggle(name)} />
                {name}
              </Option>
            ))}
          </Options>
          <Actions>
            <ActionButton type="button">취소</ActionButton>
            <ActionButton type="submit" $primary>선택완료</ActionButton>
          </Actions>
        </DialogBody>
        <Marks width="700" height="710" viewBox="0 0 700 710" fill="none" stroke="#de0000" aria-hidden="true">
          <path d="M43.500 240 60 256.500 76.500 230M42.500 290 58.500 309 75 281" strokeWidth="5" />
          <path d="M139.500 324.500 354 608" strokeWidth="5" />
          <path d="M366 627 342 615 362 600z" fill="#de0000" stroke="none" />
          <rect x="349.500" y="632.500" width="133" height="58" strokeWidth="5" />
        </Marks>
      </Dialog>
    </Backdrop>
  );
}

export default function App() {
  return (
    <>
      <GlobalStyle />
      <Page>
        <Header>
          <HeaderSide>
            <Logo href="#">
              <LogoRoof width="24" height="26" viewBox="0 0 24 26" fill="none" stroke="#111" strokeWidth="2">
                <path d="M1.500 25V9L11 2l9.500 7v4" />
              </LogoRoof>
              장부대장
              <LogoTag>프차</LogoTag>
            </Logo>
            <Brand>청년부엌</Brand>
          </HeaderSide>
          <Nav>
            <NavLink href="#">장부대장 프차</NavLink>
            <NavLink href="#">가맹점관리</NavLink>
            <NavLink href="#">
              <Pill $solid>리뷰 품은</Pill>
              <Bubble width="24" height="16" viewBox="0 0 24 16">
                <path d="M6 0h12a6 6 0 0 1 0 12h-8l-3 4v-4H6A6 6 0 0 1 6 0z" fill="#2bb58f" />
                <path d="M5 4.500h13M5 8h7" stroke="#fff" strokeWidth="1.500" />
              </Bubble>
              트렌드분석
            </NavLink>
            <NavLink href="#" $muted>
              <Pill>Comming Soon</Pill>
              상권분석
            </NavLink>
          </Nav>
          <Utils>
            <UtilButton><HelpIcon />도움말</UtilButton>
            <UtilButton><UserIcon />내정보</UtilButton>
            <UtilButton><Settings size={17} strokeWidth={1.6} />설정</UtilButton>
          </Utils>
        </Header>

        <Body>
          <SideNav>
            <SideLink href="#">주소로 검색</SideLink>
            <SideLink href="#">맛집랭킹 정보</SideLink>
            <SideLink href="#" $active>지역 상권 정보</SideLink>
          </SideNav>

          <Panel>
            <Crumbs>
              <KoreaIcon />서울시<ChevronRight size={13} />강남구<ChevronRight size={13} /><strong>논현1동</strong>
            </Crumbs>
            <PanelTitle><em>소비데이터 기반</em>매출 상권정보<Info size={16} strokeWidth={1.8} /></PanelTitle>
            <Section $bottom={29}>
              <SectionTitle $gap={15}>최근 1년 월 평균 매출 추이<Info size={15} strokeWidth={1.8} /></SectionTitle>
              <LineChart labels={months} data={series} left={22} step={24.7} end={294} width={308} />
              <Legend>
                {series.map((s) => (
                  <LegendItem key={s.name} $color={s.color}>{s.name}</LegendItem>
                ))}
              </Legend>
            </Section>
            <Section $bottom={10}>
              <SectionTitle $gap={8}>최근 월 평균 매출<Info size={15} strokeWidth={1.8} /><time>2023.12</time></SectionTitle>
              <Stats />
            </Section>
            <Section $fill>
              <SectionTitle $gap={15}>업종별 평균 매출</SectionTitle>
              <Table $empty $row={55}>
                <tbody>
                  {["한식", "중식", "일식"].map((name) => (
                    <tr key={name}><th scope="row">{name}</th><td>데이터가 없어요</td></tr>
                  ))}
                </tbody>
              </Table>
            </Section>
            <PanelFooter>
              <ReportButton><ReportIcon />상권분석 보고서</ReportButton>
            </PanelFooter>
          </Panel>

          <Panel $tinted>
            <Crumbs $tinted>서울특별시<ChevronRight size={13} />강남구<ChevronRight size={13} /><strong>논현1동</strong></Crumbs>
            <PanelTitle $tinted><em>실데이터 기반</em>매출 상권정보</PanelTitle>
            <CardColumn>
              <Card $bottom={60}>
                <SectionTitle $gap={15}>최근 1년 월 평균 매출 추이</SectionTitle>
                <LineChart labels={months.slice(1)} data={flatSeries} left={22} step={21.7} end={264} width={278} />
              </Card>
              <Card $outlined $bottom={8}>
                <SectionTitle $gap={8}>최근 월 평균 매출</SectionTitle>
                <Stats />
              </Card>
              <Card $fill>
                <SectionTitle $gap={20}>장부대장 업종별 평균 매출</SectionTitle>
                <Table $row={43}>
                  <tbody>
                    {ranking.map(([name, sales, count]) => (
                      <tr key={name}><th scope="row">{name}</th><td>{sales}</td><td>{count}<FlagIcon /></td></tr>
                    ))}
                  </tbody>
                </Table>
              </Card>
            </CardColumn>
          </Panel>

          <MapArea>
            <CityMap />
            <MapButtons>
              <MapButton><AreaIcon />배달앱분석</MapButton>
              <MapButton><AreaIcon />영역분석</MapButton>
              <MapButton><StoreIcon />주변가게</MapButton>
              <MapButton><PublicIcon />공공정보</MapButton>
            </MapButtons>
            <MapTools>
              <ToolGroup>
                <ToolButton><ToolIcon name="satellite" />위성지도</ToolButton>
              </ToolGroup>
              <ToolGroup>
                <ToolButton><Printer size={20} strokeWidth={1.6} />저장.인쇄</ToolButton>
                <ToolButton><ToolIcon name="ruler" />거리측정</ToolButton>
                <ToolButton><ToolIcon name="roadview" />거리뷰</ToolButton>
                <ToolButton><ToolIcon name="target" />현위치</ToolButton>
              </ToolGroup>
              <ToolGroup>
                <ToolButton aria-label="확대"><Plus size={24} strokeWidth={1.6} /></ToolButton>
                <ToolButton aria-label="축소"><Minus size={24} strokeWidth={1.6} /></ToolButton>
              </ToolGroup>
            </MapTools>
            <MapFoot>
              <PlaceBox>서울시<ChevronRight size={17} />강남구<ChevronRight size={17} />논현1동</PlaceBox>
              <Copyright>COPYRIGHT ⓒ Foodnoteservice Inc. All right Reserved</Copyright>
            </MapFoot>
            <MapScale>NAVER<ScaleBar>100m</ScaleBar></MapScale>
          </MapArea>
        </Body>
      </Page>
      <CategoryDialog />
      <ChatButton aria-label="채팅 상담">
        <svg width="34" height="34" viewBox="0 0 34 34" fill="none" stroke="#0b4a66" strokeWidth="3">
          <path d="M17 3.500a13.500 13.500 0 1 0 6.500 25.300l6 1.700-2-5.500A13.500 13.500 0 0 0 17 3.500z" strokeLinejoin="round" />
          <path d="M13 14v6M21 14v6" />
        </svg>
      </ChatButton>
    </>
  );
}
